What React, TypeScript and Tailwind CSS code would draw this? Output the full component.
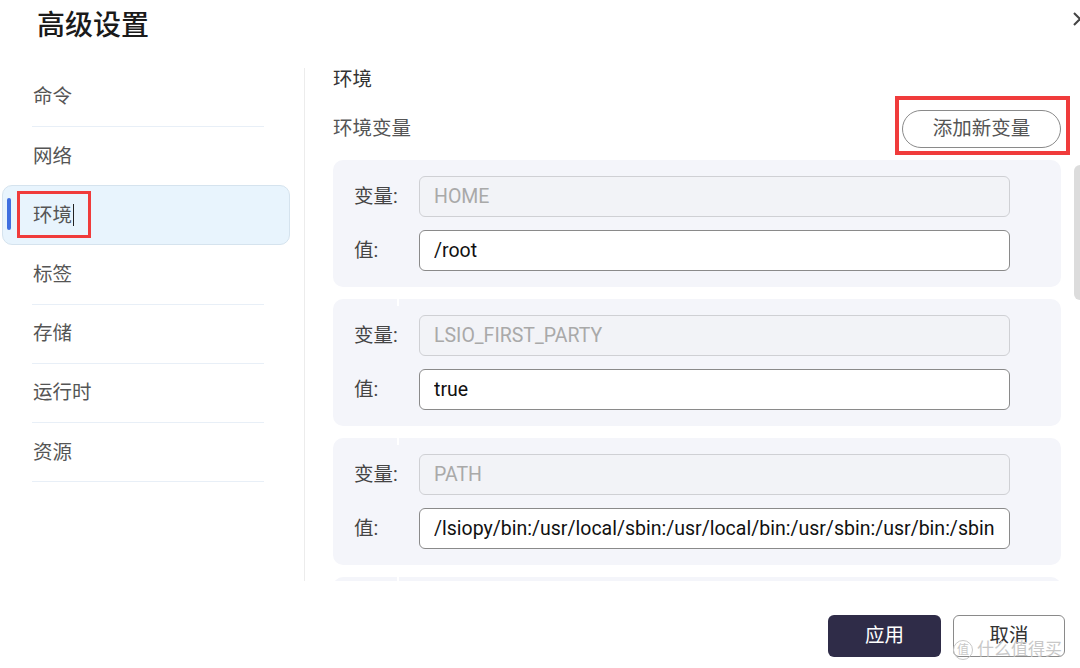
import React from "react";

const navItems = ["命令", "网络", "环境", "标签", "存储", "运行时", "资源"];

const envVars = [
  { key: "HOME", value: "/root" },
  { key: "LSIO_FIRST_PARTY", value: "true" },
  { key: "PATH", value: "/lsiopy/bin:/usr/local/sbin:/usr/local/bin:/usr/sbin:/usr/bin:/sbin:/bin" },
];

function EnvCard({ name, value, notch }: { name: string; value: string; notch: boolean }) {
  return (
    <div className="relative shrink-0 rounded-[10px] bg-[#f4f5fa] pt-[16px] pb-[16px] pl-[21px] pr-[51px]">
      {notch && <div className="absolute left-[64px] top-0 h-[7px] w-[2px] bg-white" />}
      <div className="flex items-center">
        <span className="w-[65px] text-[19.5px] text-[#444]">变量:</span>
        <input
          readOnly
          value={name}
          className="h-[41px] flex-1 rounded-[6px] border border-[#cfd0d4] bg-[#f2f3f7] px-[14px] text-[19.5px] text-[#a9a9a9] outline-none"
        />
      </div>
      <div className="mt-[13px] flex items-center">
        <span className="w-[65px] text-[19.5px] text-[#444]">值:</span>
        <input
          readOnly
          value={value}
          className="h-[41px] flex-1 rounded-[6px] border border-[#8a8a8a] bg-white px-[14px] text-[19.5px] text-[#111] outline-none"
        />
      </div>
    </div>
  );
}

export default function App() {
  return (
    <div
      className="relative flex h-[668px] w-[1080px] flex-col overflow-hidden bg-white"
      style={{ fontFamily: "Roboto, 'Noto Sans CJK SC', sans-serif" }}
    >
      {/* Header */}
      <div className="relative h-[68px] shrink-0">
        <h1 className="pl-[37px] pt-[7px] text-[28px] font-medium leading-[38px] text-[#1a1a1a]">高级设置</h1>
        <svg className="absolute left-[1073px] top-[12px]" width="14" height="14" viewBox="0 0 14 14">
          <path d="M1 1L13 13M13 1L1 13" stroke="#444" strokeWidth="2" fill="none" />
        </svg>
      </div>

      {/* Body */}
      <div className="flex h-[513px] shrink-0">
        {/* Sidebar */}
        <div className="w-[305px] shrink-0 border-r border-[#ececec] pl-[32px] pr-[40px]">
          {navItems.map((item) => {
            const active = item === "环境";
            return (
              <div
                key={item}
                className={`relative flex h-[59.2px] items-center border-b ${active ? "border-transparent" : "border-[#e8eff7]"}`}
              >
                {active && (
                  <div className="absolute -left-[30px] -right-[26px] -top-px bottom-0 rounded-[10px] border border-[#d5e3ee] bg-[#e8f4fd]">
                    <div className="absolute left-[4px] top-[12px] h-[32px] w-[4px] rounded-full bg-[#3f6fe0]" />
                    <div className="absolute left-[14px] top-[5px] h-[47px] w-[74px] border-[3px] border-[#f03b3b]" />
                  </div>
                )}
                <span className="relative pl-px text-[19.5px] text-[#555]">
                  {item}
                  {active && <span className="ml-px inline-block h-[22px] w-px translate-y-[4px] bg-[#222]" />}
                </span>
              </div>
            );
          })}
        </div>

        {/* Content */}
        <div className="relative flex-1 overflow-hidden pl-[28px] pr-[19px]">
          <div className="text-[19.5px] leading-[24px] text-[#333]">环境</div>
          <div className="mt-[18px] flex h-[38px] items-center justify-between">
            <span className="text-[19.5px] text-[#555]">环境变量</span>
            <div className="relative">
              <div className="absolute -left-[7px] -right-[9px] -top-[14px] -bottom-[7px] border-[4px] border-[#f03b3b]" />
              <button className="relative h-[38px] w-[159px] rounded-full border border-[#8a8a8a] bg-white text-[19.5px] text-[#555]">
                添加新变量
              </button>
            </div>
          </div>
          <div className="mt-[12px] flex flex-col gap-[12px]">
            {envVars.map((v, i) => (
              <EnvCard key={i} name={v.key} value={v.value} notch={i > 0} />
            ))}
            <div className="relative h-[40px] shrink-0 rounded-[10px] bg-[#f4f5fa]">
              <div className="absolute left-[64px] top-0 h-[7px] w-[2px] bg-white" />
            </div>
          </div>
          {/* Scrollbar */}
          <div className="absolute right-0 top-[97px] h-[135px] w-[6px] rounded-l-full bg-[#dcdcdc]" />
        </div>
      </div>

      {/* Footer */}
      <div className="relative flex flex-1 items-start justify-end gap-[12px] pr-[15px] pt-[34px]">
        <button className="h-[42px] w-[113px] rounded-[6px] bg-[#2f2c48] text-[19.5px] text-white">应用</button>
        <button className="h-[42px] w-[112px] rounded-[6px] border border-[#8a8a8a] bg-white text-[19.5px] text-[#333]">
          取消
        </button>
        <div className="pointer-events-none absolute left-[953px] top-[56px] flex items-center gap-[4px] text-[17px] text-[#c8c8c8]">
          <span className="flex h-[20px] w-[20px] items-center justify-center rounded-full border border-[#c8c8c8] text-[12px]">值</span>
          <span>什么值得买</span>
        </div>
      </div>
    </div>
  );
}
